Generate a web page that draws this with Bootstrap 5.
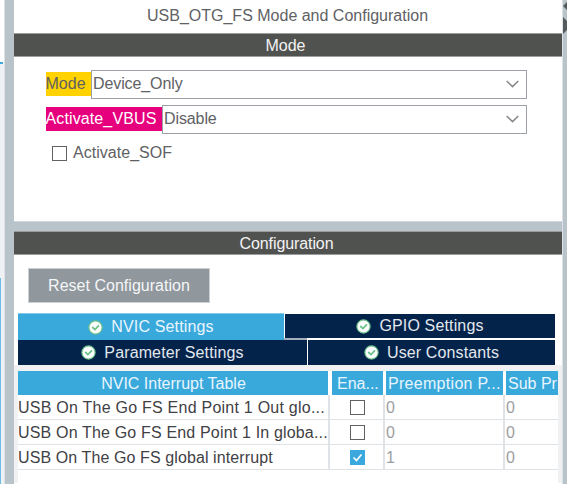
<!DOCTYPE html>
<html lang="en">
<head>
<meta charset="utf-8">
<title>USB_OTG_FS Mode and Configuration</title>
<link href="https://cdn.jsdelivr.net/npm/bootstrap@5.3.0/dist/css/bootstrap.min.css" rel="stylesheet">
<style>
body{font:16px/24px "Liberation Sans",Arial,sans-serif;color:#606164;background:#b8c4ca;width:567px;height:484px;white-space:nowrap}
.tree-edge{width:5px;background:linear-gradient(90deg,#eef1f5 3px,#0000 3px) 0 64px no-repeat,linear-gradient(90deg,#3ba9dd 3px,#0000 3px) 0 62px/5px 2px no-repeat,linear-gradient(#fff 0 62px,#f0f2f5 64px);border-right:1px solid #dde2e6}
.tree-edge i{width:1px;margin-top:278px;background:#6fbbe6}
.edge-gap{width:9px}
.pane{width:549px;border-right:1px solid #dce2e6}
.pane-title{height:33px;padding:4px 0 0 133px}
.bar{height:24px;background:#505250;color:#f4f4f4;border:solid #9b9e9e;border-width:1px 0;line-height:24px}
.mode-bar{padding-right:5px}
.conf-bar{padding-right:3px;letter-spacing:-.1px}
.mode-area{height:164px;padding:13px 0 0 31.5px}
.combo-row{height:29px;width:481.5px;margin-bottom:6px}
.tag-mode,.tag-vbus{height:24px;line-height:24px;margin-bottom:1px}
.tag-mode{background:#ffd200;width:45.5px}
.tag-vbus{background:#e6007e;color:#fff;width:116.5px;letter-spacing:.12px}
.combo{border:1px solid #9ba1a7;height:29px;padding:0 7px 1px 1px;background:#fff;letter-spacing:-.1px}
.sof{padding:1px 0 0 6.5px;letter-spacing:.03px}
.sof .box{margin-right:6px;margin-top:1px}
.box{width:15px;height:15px;border:1px solid #5f6163;background:#fff}
.box.on{background:#3ba9dd;border-color:#3ba9dd}
.splitter{height:10px;background:#b8c4ca;border-top:1px solid #cfd7dc}
.reset{width:182px;height:35px;margin:13px 0 10px 14px;background:#90979d;color:#f4f6f8;border:1px solid #ccd0d3;border-radius:0;font-size:16px;line-height:24px;letter-spacing:.02px}
.tabs{width:537px;margin-left:4px}
.tab-a,.tab-b{background:#03234b;color:#e3e8ee;line-height:26px}
.tab-a{height:25px;border-top:1px solid #a3afbb;letter-spacing:.15px}
.tab-b{height:27px;border-top:2px solid #a3afbb;letter-spacing:.13px}
.tab-a.sel{background:#39a9dc;color:#e8f5fc;height:27px;margin-bottom:-2px;z-index:1;border-color:#82c8e8}
.tabs svg{margin-right:8px}
.grid-area{background:#eff1f3;padding:6px 4px 0 4px;height:118px}
.irq{background:#fff;height:112px;overflow:hidden}
.irq-row{display:grid;grid-template-columns:312px 55px 120px 53px;height:25px;line-height:26px}
.irq-row>div{border:solid #dfe3e7;border-width:0 2px 1px 0;overflow:hidden;padding-left:1px;color:#9c9ea2}
.irq-row>div:first-child{padding-left:0;color:#3f4145}
.irq-row>div:last-child{border-right:0}
.irq-head{height:24px;line-height:25px}
.irq-head>div,.irq-head>div:first-child{background:#39a9dc;border:0;color:#e8f5fc;margin-right:2px;margin-left:1px;padding-left:2px}
.irq-head>div:first-child{margin-left:0;padding:0 0 0 1px}
.irq-head>div:nth-child(2){margin-left:2px;padding-left:5px}
.irq-head>div:nth-child(3){letter-spacing:.3px}
.irq-head>div:last-child{margin-right:0}
.name-a{letter-spacing:.24px}.name-b{letter-spacing:.17px}.name-c{letter-spacing:.1px}
</style>
<script src="https://cdn.jsdelivr.net/npm/bootstrap@5.3.0/dist/js/bootstrap.bundle.min.js"></script>
</head>
<body class="overflow-hidden">
<svg class="d-none"><defs>
<symbol id="ok" viewBox="0 0 15 15"><circle cx="7.5" cy="7.5" r="6.6" fill="#fff" stroke="#6fc48c" stroke-width="1.2"/><path d="M4.2 7 6.9 9.6 11 5.4" fill="none" stroke="#6cc189" stroke-width="1.8"/></symbol>
<symbol id="chev" viewBox="0 0 13 8"><path d="M.7 1 6.5 6.6 12.3 1" fill="none" stroke="#858789" stroke-width="1.5"/></symbol>
</defs></svg>
<div class="d-flex h-100">
  <div class="tree-edge d-flex flex-shrink-0"><i></i></div>
  <div class="edge-gap flex-shrink-0"></div>
  <main class="pane bg-white flex-shrink-0">
    <div class="pane-title">USB_OTG_FS Mode and Configuration</div>
    <div class="bar mode-bar text-center">Mode</div>
    <div class="mode-area">
      <div class="combo-row d-flex align-items-center"><label class="tag-mode">Mode</label>
        <div class="combo flex-grow-1 d-flex justify-content-between align-items-center"><span>Device_Only</span><svg width="13" height="8"><use href="#chev"/></svg></div></div>
      <div class="combo-row d-flex align-items-center"><label class="tag-vbus">Activate_VBUS</label>
        <div class="combo flex-grow-1 d-flex justify-content-between align-items-center"><span>Disable</span><svg width="13" height="8"><use href="#chev"/></svg></div></div>
      <div class="sof d-flex align-items-center"><span class="box"></span><span>Activate_SOF</span></div>
    </div>
    <div class="splitter"></div>
    <div class="bar conf-bar text-center">Configuration</div>
    <button class="reset btn p-0 d-block">Reset Configuration</button>
    <div class="tabs">
      <div class="d-flex">
        <div class="tab-a sel d-flex justify-content-center align-items-center position-relative" style="width:266px"><svg width="15" height="15"><use href="#ok"/></svg>NVIC Settings</div>
        <div class="tab-a d-flex justify-content-center align-items-center flex-grow-1 border-start border-white"><svg width="15" height="15"><use href="#ok"/></svg>GPIO Settings</div>
      </div>
      <div class="d-flex">
        <div class="tab-b d-flex justify-content-center align-items-center" style="width:289px"><svg width="15" height="15"><use href="#ok"/></svg>Parameter Settings</div>
        <div class="tab-b d-flex justify-content-center align-items-center flex-grow-1 border-start border-white"><svg width="15" height="15"><use href="#ok"/></svg>User Constants</div>
      </div>
    </div>
    <div class="grid-area"><div class="irq">
      <div class="irq-row irq-head"><div class="text-center">NVIC Interrupt Table</div><div>Ena...</div><div>Preemption P...</div><div>Sub Pr</div></div>
      <div class="irq-row"><div class="name-a">USB On The Go FS End Point 1 Out glo...</div><div class="d-flex justify-content-center align-items-center"><span class="box"></span></div><div>0</div><div>0</div></div>
      <div class="irq-row"><div class="name-b">USB On The Go FS End Point 1 In globa...</div><div class="d-flex justify-content-center align-items-center"><span class="box"></span></div><div>0</div><div>0</div></div>
      <div class="irq-row"><div class="name-c">USB On The Go FS global interrupt</div><div class="d-flex justify-content-center align-items-center"><span class="box on d-flex"><svg width="13" height="13"><path d="M2.5 6.5 5.5 9.5 10.5 3.5" fill="none" stroke="#fff" stroke-width="1.6"/></svg></span></div><div>1</div><div>0</div></div>
    </div></div>
  </main>
  <div class="flex-grow-1 overflow-hidden"><svg class="d-block" width="4" height="40"><path d="M4 2 0 6l4 4ZM0 17l4 4v9L0 34Z" fill="#555a5d"/></svg></div>
</div>
</body>
</html>
